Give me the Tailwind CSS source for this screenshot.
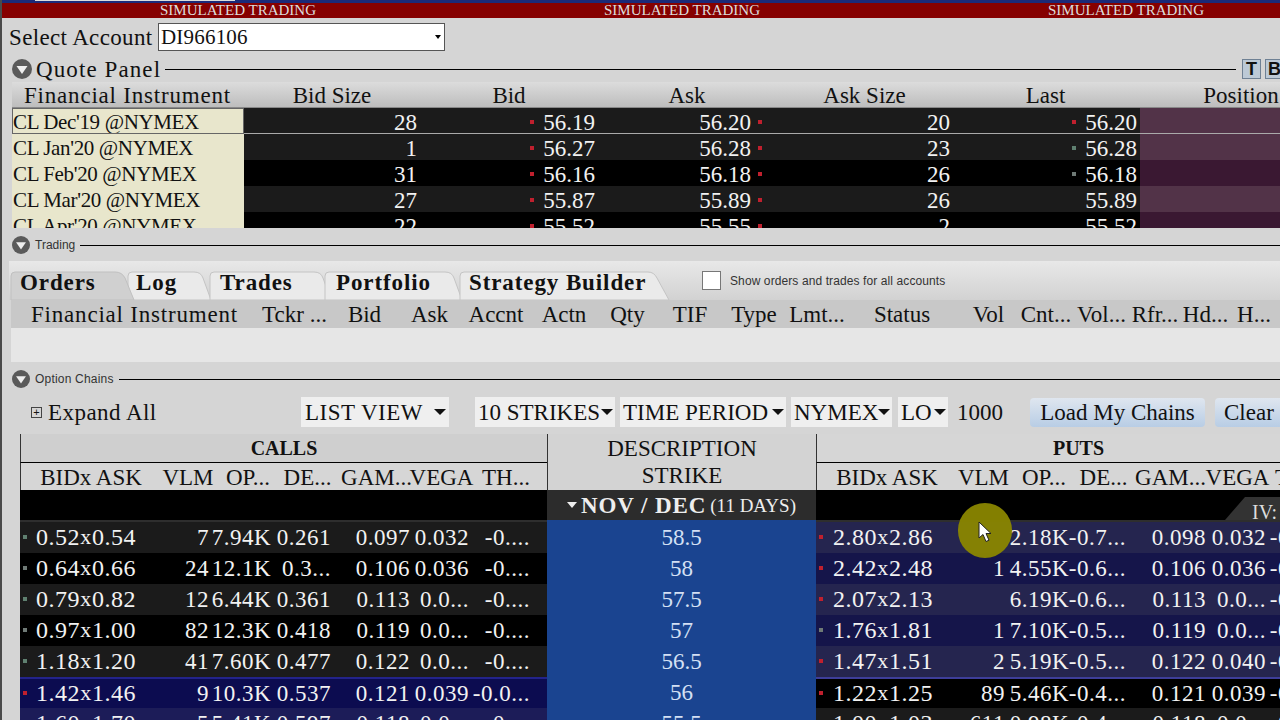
<!DOCTYPE html>
<html lang="en">
<head>
  <meta charset="UTF-8" />
  <title>Option Trader</title>
  <script src="https://cdn.jsdelivr.net/npm/@tailwindcss/browser@4"></script>
</head>
<body class="relative w-[1280px] h-[720px] overflow-hidden bg-[#d5d5d5] font-['Liberation_Serif',serif] text-[23px] text-[#111] leading-none">

  <!-- Window edge -->
  <div class="absolute left-0 top-0 w-[2px] h-full bg-[#4a4a4a] z-10"></div>

  <!-- Top strip -->
  <div class="h-[3px] bg-[#1b2a78]"><div class="ml-[35px] w-[200px] h-px bg-[#ddd]"></div></div>
  <div class="h-[15px] bg-[#860000] grid grid-cols-[476px_412px_476px] text-[#ddd] text-[15px] items-center text-center whitespace-nowrap">
    <span>SIMULATED TRADING</span><span>SIMULATED TRADING</span><span>SIMULATED TRADING</span>
  </div>

  <!-- Account -->
  <div class="h-[38px] flex items-center pl-[9px]">
    <span class="w-[149px] tracking-[0.35px]">Select Account</span>
    <div class="w-[287px] h-[28px] bg-white border border-[#555] flex items-center justify-between pl-[2px] pr-[3px]">
      <span class="text-[21px] tracking-[0.2px]">DI966106</span>
      <span class="w-0 h-0 border-x-[3px] border-x-transparent border-t-[4px] border-t-black"></span>
    </div>
  </div>

  <!-- Quote panel -->
  <div class="h-[26px] flex items-center pl-[12px] gap-[4px]">
    <svg class="w-[20px] h-[20px] shrink-0" viewBox="0 0 20 20"><circle cx="10" cy="10" r="10" fill="#5a5a5a"/><path d="M4.5 7h11L10 15z" fill="#eee"/></svg>
    <span class="tracking-[1.1px]">Quote Panel</span>
    <div class="flex-1 h-px bg-black"></div>
    <div class="w-[19px] h-[20px] bg-[#bcc9d6] border border-[#6f8194] flex items-center justify-center font-['Liberation_Sans',sans-serif] font-bold text-[18px] ml-[2px]">T</div>
    <div class="w-[19px] h-[20px] bg-[#bcc9d6] border border-[#6f8194] flex items-center justify-center font-['Liberation_Sans',sans-serif] font-bold text-[18px] shrink-0 -mr-[4px]">B</div>
  </div>
  <div class="h-[26px] pt-[1px] ml-[12px] w-[1400px] grid grid-cols-[232px_176px_178px_178px_177px_185px_206px] items-center text-center bg-gradient-to-b from-[#dcdcdc] to-[#bdbdbd] border-b border-[#888]">
    <span class="text-left pl-[12px] tracking-[0.8px] whitespace-nowrap">Financial Instrument</span>
    <span>Bid Size</span><span>Bid</span><span>Ask</span><span>Ask Size</span><span>Last</span><span>Position</span>
  </div>
  <div id="quotes" class="ml-[12px] h-[120px] overflow-hidden"></div>

  <!-- Trading -->
  <div class="h-[20px] mt-[7px] flex items-center pl-[12px] gap-[5px]">
    <svg class="w-[18px] h-[18px] shrink-0" viewBox="0 0 20 20"><circle cx="10" cy="10" r="10" fill="#5a5a5a"/><path d="M4.5 7h11L10 15z" fill="#eee"/></svg>
    <span class="font-['Liberation_Sans',sans-serif] text-[12px] text-[#333]">Trading</span>
    <div class="flex-1 h-px bg-black"></div>
  </div>
  <div class="relative h-[39px] mt-[6px] ml-[9px] bg-gradient-to-b from-[#e8e8e8] to-[#d2d2d2] flex">
    <svg class="absolute left-0 top-0 w-[700px] h-[39px]" viewBox="0 0 700 39">
      <path d="M119 39V15q0-4 4-4h62q7 0 9 6l8 22z" fill="#eaeaea" stroke="#c4c4c4"/>
      <path d="M201 39V15q0-4 4-4h100q7 0 9 6l8 22z" fill="#eaeaea" stroke="#c4c4c4"/>
      <path d="M316 39V15q0-4 4-4h116q7 0 9 6l8 22z" fill="#eaeaea" stroke="#c4c4c4"/>
      <path d="M451 39V15q0-4 4-4h184q6 0 9 6l12 22z" fill="#eaeaea" stroke="#c4c4c4"/>
      <path d="M2 39V15q0-4 4-4h100q7 0 10 6l9 22z" fill="#d0d0d0" stroke="#c0c0c0"/>
    </svg>
    <div class="relative flex items-center font-bold h-[39px] pt-[4px] tracking-[0.9px] whitespace-nowrap *:shrink-0">
      <span class="ml-[11px] w-[80px]">Orders</span>
      <span class="ml-[36px] w-[40px]">Log</span>
      <span class="ml-[44px] w-[75px]">Trades</span>
      <span class="ml-[41px] w-[94px]">Portfolio</span>
      <span class="ml-[39px] w-[176px]">Strategy Builder</span>
      <span class="ml-[57px] w-[19px] h-[19px] bg-white border border-[#777] -mt-[4px]"></span>
      <span class="ml-[9px] font-['Liberation_Sans',sans-serif] font-normal text-[12px] text-[#333] tracking-[0.1px] -mt-[4px]">Show orders and trades for all accounts</span>
    </div>
  </div>
  <div class="h-[28px] ml-[11px] bg-[#c8c8c8] flex items-center whitespace-nowrap *:shrink-0">
    <span class="ml-[20px] w-[207px] flex justify-center tracking-[0.8px]">Financial Instrument</span>
    <span class="ml-[23px] w-[67px] flex justify-center">Tckr ...</span>
    <span class="ml-[20px] w-[33px] flex justify-center">Bid</span>
    <span class="ml-[30px] w-[37px] flex justify-center">Ask</span>
    <span class="ml-[20px] w-[56px] flex justify-center">Accnt</span>
    <span class="ml-[17px] w-[46px] flex justify-center">Actn</span>
    <span class="ml-[23px] w-[35px] flex justify-center">Qty</span>
    <span class="ml-[27px] w-[36px] flex justify-center">TIF</span>
    <span class="ml-[22px] w-[48px] flex justify-center">Type</span>
    <span class="ml-[10px] w-[58px] flex justify-center">Lmt...</span>
    <span class="ml-[25px] w-[62px] flex justify-center">Status</span>
    <span class="ml-[39px] w-[33px] flex justify-center">Vol</span>
    <span class="ml-[15px] w-[52px] flex justify-center">Cnt...</span>
    <span class="ml-[4px] w-[51px] flex justify-center">Vol...</span>
    <span class="ml-[4px] w-[48px] flex justify-center">Rfr...</span>
    <span class="ml-[3px] w-[47px] flex justify-center">Hd...</span>
    <span class="ml-[8px] w-[34px] flex justify-center">H...</span>
  </div>
  <div class="h-[34px] ml-[11px] bg-[#e6e6e6]"></div>

  <!-- Option chains -->
  <div class="h-[20px] mt-[7px] flex items-center pl-[12px] gap-[5px]">
    <svg class="w-[18px] h-[18px] shrink-0" viewBox="0 0 20 20"><circle cx="10" cy="10" r="10" fill="#5a5a5a"/><path d="M4.5 7h11L10 15z" fill="#eee"/></svg>
    <span class="font-['Liberation_Sans',sans-serif] text-[12px] text-[#333] tracking-[0.2px]">Option Chains</span>
    <div class="flex-1 h-px bg-black"></div>
  </div>
  <div class="h-[45px] pt-[1px] flex items-center whitespace-nowrap *:shrink-0">
    <span class="ml-[31px] w-[11px] h-[11px] border border-[#444] flex items-center justify-center text-[11px] font-['Liberation_Sans',sans-serif]">+</span>
    <span class="ml-[6px] w-[107px] tracking-[0.45px]">Expand All</span>
    <div class="ml-[146px] w-[148px] h-[30px] bg-[#efefef] flex items-center justify-between pl-[4px] pr-[3px]"><span class="tracking-[0.5px]">LIST VIEW</span><i class="w-0 h-0 border-x-[6px] border-x-transparent border-t-[6px] border-t-[#111]"></i></div>
    <div class="ml-[26px] w-[140px] h-[30px] bg-[#efefef] flex items-center justify-between pl-[3px] pr-[2px]"><span>10 STRIKES</span><i class="w-0 h-0 border-x-[6px] border-x-transparent border-t-[6px] border-t-[#111]"></i></div>
    <div class="ml-[5px] w-[166px] h-[30px] bg-[#efefef] flex items-center justify-between pl-[3px] pr-[2px]"><span>TIME PERIOD</span><i class="w-0 h-0 border-x-[6px] border-x-transparent border-t-[6px] border-t-[#111]"></i></div>
    <div class="ml-[5px] w-[101px] h-[30px] bg-[#efefef] flex items-center justify-between pl-[3px] pr-[2px]"><span>NYMEX</span><i class="w-0 h-0 border-x-[6px] border-x-transparent border-t-[6px] border-t-[#111]"></i></div>
    <div class="ml-[6px] w-[50px] h-[30px] bg-[#efefef] flex items-center justify-between pl-[3px] pr-[2px]"><span>LO</span><i class="w-0 h-0 border-x-[6px] border-x-transparent border-t-[6px] border-t-[#111]"></i></div>
    <span class="ml-[9px] w-[50px]">1000</span>
    <div class="ml-[23px] w-[175px] h-[29px] rounded-[4px] bg-gradient-to-b from-[#dfe6ef] to-[#b8cde5] flex items-center justify-center">Load My Chains</div>
    <div class="ml-[10px] w-[80px] h-[29px] rounded-[4px] bg-gradient-to-b from-[#dfe6ef] to-[#b8cde5] flex items-center pl-[9px]">Clear</div>
  </div>

  <!-- Chain table -->
  <div class="ml-[20px] w-[1300px] grid grid-cols-[527px_269px_484px]">
    <div>
      <div class="h-[29px] bg-[#cfcfcf] border-b border-black border-l border-l-[#333] flex items-center justify-center font-bold text-[20px]">CALLS</div>
      <div class="h-[27px] pt-[1px] bg-[#d6d6d6] border-l border-[#333] flex items-center whitespace-nowrap *:shrink-0">
        <span class="ml-[19px] w-[102px] flex justify-center">BIDx ASK</span>
        <span class="ml-[22px] w-[48px] flex justify-center">VLM</span>
        <span class="ml-[13px] w-[46px] flex justify-center">OP...</span>
        <span class="ml-[13px] w-[47px] flex justify-center">DE...</span>
        <span class="ml-[12px] w-[67px] flex justify-center">GAM...</span>
        <span class="ml-[1px] w-[61px] flex justify-center">VEGA</span>
        <span class="ml-[9px] w-[50px] flex justify-center">TH...</span>
      </div>
      <div class="h-[32px] bg-black border-b-2 border-[#2e2e2e]"></div>
      <div id="calls" class="h-[198px] overflow-hidden"></div>
    </div>
    <div class="text-center">
      <div class="h-[56px] bg-[#d3d3d3] border-l border-[#333] flex flex-col justify-center gap-[4px]"><span>DESCRIPTION</span><span>STRIKE</span></div>
      <div class="h-[30px] bg-[#2c2c2c] text-[#eee] flex items-center justify-center gap-[4px]">
        <i class="w-0 h-0 border-x-[5px] border-x-transparent border-t-[6px] border-t-[#eee]"></i>
        <span class="font-bold tracking-[0.9px]">NOV / DEC</span><span class="text-[19px]">(11 DAYS)</span>
      </div>
      <div id="strikes" class="h-[200px] overflow-hidden bg-[#1a4490] text-[#d4e0f4]"></div>
    </div>
    <div class="relative">
      <div class="h-[29px] bg-[#d6d6d6] border-b border-black border-l border-l-[#333] flex items-center justify-center font-bold text-[20px] pl-[40px]">PUTS</div>
      <div class="h-[27px] pt-[1px] bg-[#d6d6d6] border-l border-[#333] flex items-center whitespace-nowrap *:shrink-0">
        <span class="ml-[19px] w-[102px] flex justify-center">BIDx ASK</span>
        <span class="ml-[22px] w-[47px] flex justify-center">VLM</span>
        <span class="ml-[14px] w-[46px] flex justify-center">OP...</span>
        <span class="ml-[13px] w-[47px] flex justify-center">DE...</span>
        <span class="ml-[12px] w-[63px] flex justify-center">GAM...</span>
        <span class="ml-[5px] w-[61px] flex justify-center">VEGA</span>
        <span class="ml-[7px]">TH...</span>
      </div>
      <div class="h-[32px] bg-black border-b-2 border-[#2e2e2e]"></div>
      <div id="puts" class="h-[198px] overflow-hidden"></div>
      <!-- IV tab -->
      <svg class="absolute left-[409px] top-[63px] w-[55px] h-[23px]" viewBox="0 0 55 23"><path d="M0 23L20 0H55V23z" fill="#333"/></svg>
      <span class="absolute left-[436px] top-[68px] text-[#ddd] text-[20px]">IV:</span>
    </div>
  </div>

  <!-- Mouse highlight and pointer -->
  <div class="absolute left-[958px] top-[503px] w-[54px] h-[55px] rounded-full bg-[#8a8600]/95"></div>
  <svg class="absolute left-[978px] top-[521px] w-[14px] h-[22px]" viewBox="0 0 14 22"><path d="M1 1v16l4-3.5 3 7 3-1.3-3-6.7h5z" fill="#fff" stroke="#222"/></svg>

  <script>
    const red = 'bg-[#c0202e]', grn = 'bg-[#5f8070]', gry = 'bg-[#6f7a76]';
    const dot = c => c ? `<i class="w-[4px] h-[4px] shrink-0 ${c}"></i>` : '';

    const quotes = [
      ["CL Dec'19 @NYMEX", '28', red, '56.19', '56.20', red, '20', red, '56.20'],
      ["CL Jan'20 @NYMEX", '1', red, '56.27', '56.28', red, '23', grn, '56.28'],
      ["CL Feb'20 @NYMEX", '31', red, '56.16', '56.18', red, '26', gry, '56.18'],
      ["CL Mar'20 @NYMEX", '27', red, '55.87', '55.89', red, '26', '', '55.89'],
      ["CL Apr'20 @NYMEX", '22', red, '55.52', '55.55', red, '2', '', '55.52']
    ];
    const quoteBg = ['bg-[#1b1b1b]', 'bg-[#1b1b1b]', 'bg-black', 'bg-[#1b1b1b]', 'bg-black'];
    const posBg = ['bg-[#523348]', 'bg-[#523348]', 'bg-[#3a1832]', 'bg-[#523348]', 'bg-[#3a1832]'];
    document.getElementById('quotes').innerHTML = quotes.map((q, i) => `
      <div class="relative h-[26px] pt-[2px] w-[1268px] grid grid-cols-[232px_173px_178px_170px_185px_190px_140px] items-center text-[#f2f2f2] ${quoteBg[i]}">
        <span class="h-[26px] -mt-[2px] flex items-center pl-[1px] pt-[2px] text-[#111] text-[21px] tracking-[-0.35px] whitespace-nowrap bg-[#e8e6cc] ${i == 0 ? 'outline outline-[#666] -outline-offset-1' : ''}">${q[0]}</span>
        <span class="text-right">${q[1]}</span>
        <span class="flex justify-end items-center gap-[9px]">${dot(q[2])}<span>${q[3]}</span></span>
        <span class="flex justify-end items-center gap-[7px] pr-[3px]"><span>${q[4]}</span>${dot(q[5])}</span>
        <span class="text-right">${q[6]}</span>
        <span class="flex justify-end items-center gap-[9px] pr-[3px]">${dot(q[7])}<span>${q[8]}</span></span>
        <span class="h-[26px] -mt-[2px] ${posBg[i]}"></span>
        ${i == 0 ? '<div class="absolute left-[232px] right-0 bottom-0 h-px bg-[#aaa]"></div>' : ''}
      </div>`).join('');

    // dot, bid, ask, vlm, open int, delta, gamma, vega, theta
    const calls = [
      [grn, '0.52', '0.54', '7', '7.94K', '0.261', '0.097', '0.032', '-0....'],
      [gry, '0.64', '0.66', '24', '12.1K', '0.3...', '0.106', '0.036', '-0....'],
      [grn, '0.79', '0.82', '12', '6.44K', '0.361', '0.113', '0.0...', '-0....'],
      [gry, '0.97', '1.00', '82', '12.3K', '0.418', '0.119', '0.0...', '-0....'],
      [grn, '1.18', '1.20', '41', '7.60K', '0.477', '0.122', '0.0...', '-0....'],
      [red, '1.42', '1.46', '9', '10.3K', '0.537', '0.121', '0.039', '-0.0...'],
      [grn, '1.60', '1.70', '5', '5.41K', '0.597', '0.118', '0.0...', '-0....']
    ];
    const puts = [
      [red, '2.80', '2.86', '', '2.18K', '-0.7...', '0.098', '0.032', '-0.0...'],
      [red, '2.42', '2.48', '1', '4.55K', '-0.6...', '0.106', '0.036', '-0.0...'],
      [red, '2.07', '2.13', '', '6.19K', '-0.6...', '0.113', '0.0...', '-0.0...'],
      [gry, '1.76', '1.81', '1', '7.10K', '-0.5...', '0.119', '0.0...', '-0.0...'],
      [red, '1.47', '1.51', '2', '5.19K', '-0.5...', '0.122', '0.040', '-0.0...'],
      [red, '1.22', '1.25', '89', '5.46K', '-0.4...', '0.121', '0.039', '-0.0...'],
      [red, '1.00', '1.03', '611', '0.98K', '-0.4...', '0.118', '0.0...', '-0.0...']
    ];

    function chainRow(r, bg, grid, bidw) {
      return `<div class="h-[31px] grid ${grid} items-center text-[#f2f2f2] whitespace-nowrap tracking-[0.5px] ${bg}">
        <span class="flex items-center justify-center text-[24px] pb-[2px]"><span class="${bidw} flex items-center justify-between pl-[3px]">${dot(r[0])}<span>${r[1]}</span></span><span class="w-[12px] text-center text-[22px]">x</span><span class="flex-1">${r[2]}</span></span>
        <span class="text-right">${r[3]}</span>
        <span class="text-right">${r[4]}</span>
        <span class="flex justify-end">${r[5]}</span>
        <span class="flex justify-end">${r[6]}</span>
        <span class="flex justify-end">${r[7]}</span>
        <span class="flex justify-end">${r[8]}</span>
      </div>`;
    }

    const callBg = ['bg-[#1b1b1b]', 'bg-black', 'bg-[#1b1b1b]', 'bg-black', 'bg-[#1b1b1b]', 'bg-[#0c0c50] border-t-2 border-[#23238a]', 'bg-[#1c1c58]'];
    const putBg = ['bg-[#25254f]', 'bg-[#15154a]', 'bg-[#25254f]', 'bg-[#15154a]', 'bg-[#25254f]', 'bg-black border-t-2 border-[#3d3d9a]', 'bg-[#1b1b1b]'];

    document.getElementById('calls').innerHTML = calls.map((r, i) =>
      chainRow(r, callBg[i], 'grid-cols-[130px_59px_62px_60px_79px_59px_61px]', 'w-[60px]')).join('');
    document.getElementById('puts').innerHTML = puts.map((r, i) =>
      chainRow(r, putBg[i], 'grid-cols-[130px_59px_64px_57px_80px_60px_61px]', 'w-[61px]')).join('');
    document.getElementById('strikes').innerHTML = ['58.5', '58', '57.5', '57', '56.5', '56', '55.5'].map(s =>
      `<div class="h-[31px] flex items-center justify-center pt-[3px]">${s}</div>`).join('');
  </script>
</body>
</html>
